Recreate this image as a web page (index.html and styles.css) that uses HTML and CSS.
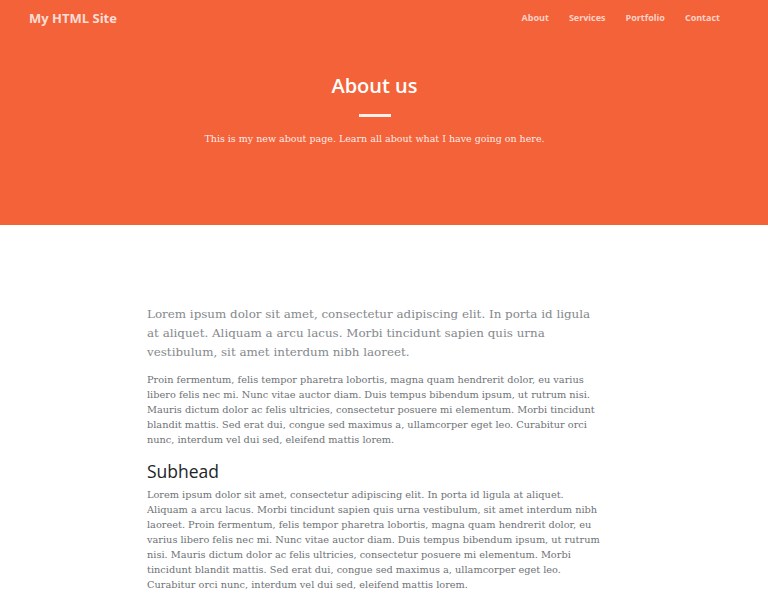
FILE: index.html
```html
<!DOCTYPE html>
<html lang="en">
<head>
<meta charset="utf-8">
<title>About us - My HTML Site</title>
<link rel="stylesheet" href="styles.css">
</head>
<body>
<header class="hero">
  <nav class="nav">
    <a class="brand" href="#">My HTML Site</a>
    <ul class="links">
      <li><a href="#">About</a></li>
      <li><a href="#">Services</a></li>
      <li><a href="#">Portfolio</a></li>
      <li><a href="#">Contact</a></li>
    </ul>
  </nav>
  <div class="hero-body">
    <h1 class="title">About us</h1>
    <hr class="divider">
    <p class="subtitle">This is my new about page. Learn all about what I have going on here.</p>
  </div>
</header>
<div class="page">
<main class="content">
  <p class="lead">Lorem ipsum dolor sit amet, consectetur adipiscing elit. In porta id ligula at aliquet. Aliquam a arcu lacus. Morbi tincidunt sapien quis urna vestibulum, sit amet interdum nibh laoreet.</p>
  <p class="text">Proin fermentum, felis tempor pharetra lobortis, magna quam hendrerit dolor, eu varius libero felis nec mi. Nunc vitae auctor diam. Duis tempus bibendum ipsum, ut rutrum nisi. Mauris dictum dolor ac felis ultricies, consectetur posuere mi elementum. Morbi tincidunt blandit mattis. Sed erat dui, congue sed maximus a, ullamcorper eget leo. Curabitur orci nunc, interdum vel dui sed, eleifend mattis lorem.</p>
  <h2 class="subhead">Subhead</h2>
  <p class="text">Lorem ipsum dolor sit amet, consectetur adipiscing elit. In porta id ligula at aliquet. Aliquam a arcu lacus. Morbi tincidunt sapien quis urna vestibulum, sit amet interdum nibh laoreet. Proin fermentum, felis tempor pharetra lobortis, magna quam hendrerit dolor, eu varius libero felis nec mi. Nunc vitae auctor diam. Duis tempus bibendum ipsum, ut rutrum nisi. Mauris dictum dolor ac felis ultricies, consectetur posuere mi elementum. Morbi tincidunt blandit mattis. Sed erat dui, congue sed maximus a, ullamcorper eget leo. Curabitur orci nunc, interdum vel dui sed, eleifend mattis lorem.</p>
</main>
</div>
</body>
</html>
```
FILE: styles.css
```css
* { box-sizing: border-box; }
html, body { margin: 0; padding: 0; }
body {
  background: #ffffff;
  font-family: "DejaVu Serif", "Liberation Serif", serif;
  color: #6c757d;
}
.hero {
  background: #f4623a;
  height: 225px;
  display: flex;
  flex-direction: column;
}
.nav {
  display: flex;
  align-items: center;
  justify-content: space-between;
  height: 36px;
  padding: 0 48px 0 29px;
}
.brand {
  font-family: "Open Sans", "DejaVu Sans", sans-serif;
  font-weight: 700;
  font-size: 13px;
  line-height: 16px;
  color: rgba(255,255,255,0.8);
  text-decoration: none;
}
.links {
  list-style: none;
  display: flex;
  gap: 20px;
  margin: 0 0 1px;
  padding: 0;
  font-size: 9px;
  line-height: 12px;
}
.links a {
  font-family: "Open Sans", "DejaVu Sans", sans-serif;
  font-weight: 700;
  color: rgba(255,255,255,0.72);
  text-decoration: none;
}
.hero-body {
  display: flex;
  flex-direction: column;
  align-items: center;
  padding: 36px 19px 0 0;
}
.title {
  margin: 0;
  font-family: "Open Sans", "DejaVu Sans", sans-serif;
  font-weight: 600;
  font-size: 20px;
  line-height: 28px;
  color: #ffffff;
}
.divider {
  width: 32px;
  height: 3px;
  border: 0;
  background: rgba(255,255,255,0.9);
  margin: 14px 0 14px;
}
.subtitle {
  margin: 0;
  font-size: 9.5px;
  line-height: 15px;
  color: rgba(255,255,255,0.9);
}
.page {
  padding-right: 19px;
}
.content {
  width: 455px;
  margin: 0 auto;
  padding: 80px 0 0 0;
}
.lead {
  margin: 0 0 10px;
  font-size: 11.9px;
  line-height: 19px;
  color: #84888c;
}
.text {
  margin: 0;
  font-size: 9.75px;
  line-height: 15px;
  color: #6e7276;
}
.subhead {
  margin: 12px 0 4px;
  font-family: "Open Sans", "DejaVu Sans", sans-serif;
  font-weight: 500;
  font-size: 17.5px;
  line-height: 24px;
  color: #212529;
}
```
